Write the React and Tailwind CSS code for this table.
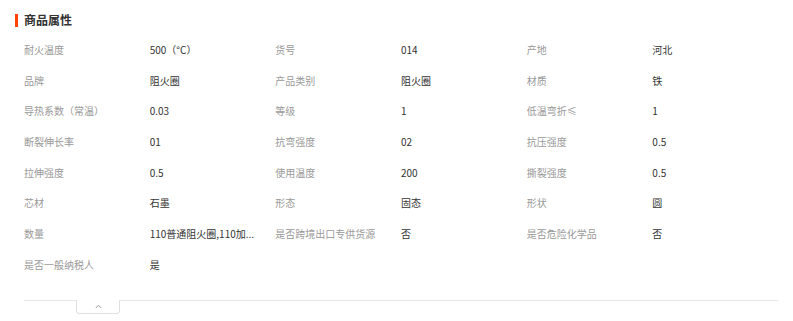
import React from "react";

const attrs = [
  ["耐火温度", "500（°C）"],
  ["货号", "014"],
  ["产地", "河北"],
  ["品牌", "阻火圈"],
  ["产品类别", "阻火圈"],
  ["材质", "铁"],
  ["导热系数（常温）", "0.03"],
  ["等级", "1"],
  ["低温弯折≤", "1"],
  ["断裂伸长率", "01"],
  ["抗弯强度", "02"],
  ["抗压强度", "0.5"],
  ["拉伸强度", "0.5"],
  ["使用温度", "200"],
  ["撕裂强度", "0.5"],
  ["芯材", "石墨"],
  ["形态", "固态"],
  ["形状", "圆"],
  ["数量", "110普通阻火圈,110加..."],
  ["是否跨境出口专供货源", "否"],
  ["是否危险化学品", "否"],
  ["是否一般纳税人", "是"],
];

const ProductAttributes = () => {
  return (
    <div
      className="w-[793px] h-[321px] bg-white overflow-hidden"
      style={{ fontFamily: '"Noto Sans CJK SC", "Noto Sans", sans-serif' }}
    >
      <div className="flex items-center pl-[15px] pt-[13px] h-[27px]">
        <span className="w-[3px] h-[13px] bg-[#ff4400] mr-[6px]" />
        <h3 className="text-[12px] leading-[14px] font-bold text-[#333]">商品属性</h3>
      </div>

      <div className="px-6 pt-[7px]">
        <div className="grid grid-cols-6 w-[754px]">
          {attrs.map(([label, value]) => (
            <React.Fragment key={label}>
              <div className="h-[30.7px] flex items-center text-[10px] text-[#999] whitespace-nowrap">
                {label}
              </div>
              <div className="h-[30.7px] flex items-center text-[10px] text-[#333] whitespace-nowrap">
                {value}
              </div>
            </React.Fragment>
          ))}
        </div>

        <div className="mt-[20px] border-t border-[#e5e5e5] w-[754px]">
          <button className="ml-[52px] -mt-px w-[44px] h-[14px] bg-white border border-t-0 border-[#e0e0e0] rounded-b-[4px] flex items-center justify-center">
            <svg width="7" height="5" viewBox="0 0 7 5" fill="none">
              <path d="M0.8 4L3.5 1.2L6.2 4" stroke="#999" strokeWidth="1" />
            </svg>
          </button>
        </div>
      </div>
    </div>
  );
};

export default function App() {
  return <ProductAttributes />;
}
